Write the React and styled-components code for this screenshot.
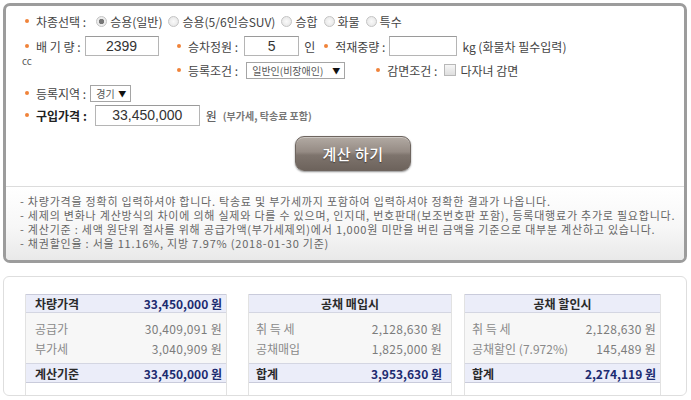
import React from 'react';
import styled, { createGlobalStyle, css } from 'styled-components';

const GlobalStyle = createGlobalStyle`
    * { box-sizing: border-box; }
    body {
        margin: 0;
        background: #fff;
        font-family: "Noto Sans CJK KR", "Noto Sans", sans-serif;
        font-size: 12px;
        color: #444;
    }
`

const Page = styled.div`
    width: 691px;
    padding: 3px 4px 0 3px;
`

const InputPanel = styled.div`
    border: 3px solid #9c9c9c;
    border-radius: 7px;
    overflow: hidden;
`

const Form = styled.div`
    padding: 4px 0 0 16px;
`

const Row = styled.div`
    display: flex;
    align-items: ${p => p.$top ? 'flex-start' : 'center'};
    height: ${p => p.$h || 22}px;
    margin-bottom: ${p => p.$mb || 0}px;
`

const Cell = styled.div`
    display: flex;
    flex-direction: column;
    width: ${p => p.$w ? `${p.$w}px` : 'auto'};
`

const Line = styled.div`
    display: flex;
    align-items: center;
    height: 24px;
`

const Bullet = styled.span`
    width: 4px;
    height: 4px;
    border-radius: 50%;
    background: #f0833a;
    margin: 0 7px 0 3px;
    flex-shrink: 0;
`

const Label = styled.span`
    white-space: nowrap;
    margin-right: ${p => p.$mr || 4}px;
    font-weight: ${p => p.$bold ? 700 : 400};
    color: ${p => p.$bold ? '#222' : '#444'};
`

const Field = styled.span`
    display: inline-flex;
    align-items: center;
    margin-left: ${p => p.$ml || 0}px;
`

const RadioDot = styled.span`
    width: 11px;
    height: 11px;
    border-radius: 50%;
    border: 1px solid #c4c4c4;
    margin: 0 3px 0 6px;
    ${p => p.$checked ? css`
        background: radial-gradient(circle, #777 0 2.4px, #ececec 3px);
    ` : css`
        background: radial-gradient(circle, #fafafa 0, #e2e2e2 100%);
    `}
`

const RadioText = styled.span`
    color: #444;
    white-space: nowrap;
`

const Check = styled.span`
    width: 12px;
    height: 12px;
    border: 1px solid #b8b8b8;
    background: linear-gradient(#f6f6f6, #dedede);
    margin-right: 4px;
`

const TextBox = styled.span`
    display: inline-flex;
    align-items: center;
    justify-content: center;
    width: ${p => p.$w}px;
    height: ${p => p.$h || 20}px;
    border: 1px solid #b5b5b5;
    border-top-color: #9a9a9a;
    background: #fff;
    font-family: "Liberation Sans", Arial, sans-serif;
    font-size: 14px;
    color: #333;
`

const After = styled.span`
    margin-left: ${p => p.$ml || 5}px;
    color: #444;
    white-space: nowrap;
`

const Unit = styled.span`
    font-size: 10px;
    color: #555;
    line-height: 10px;
    margin-top: -2px;
`

const Select = styled.span`
    display: inline-flex;
    align-items: center;
    justify-content: space-between;
    width: ${p => p.$w}px;
    height: 17px;
    border: 1px solid #a5a5a5;
    background: #fff;
    padding: 0 4px 0 5px;
    font-size: 10px;
    color: #555;
    white-space: nowrap;
`

const Arrow = styled.span`
    font-size: 8px;
    color: #111;
`

const Note = styled.span`
    margin-left: 6px;
    font-size: 10px;
    font-weight: 700;
    color: #777;
`

const ButtonRow = styled.div`
    display: flex;
    padding-left: 273px;
    margin-top: 10px;
`

const CalcButton = styled.button`
    width: 116px;
    height: 35px;
    border: 1px solid #6e655f;
    border-radius: 9px;
    background: linear-gradient(#b2aaa3 0%, #958b84 45%, #7e746d 55%, #6d635c 100%);
    box-shadow: 0 1px 2px rgba(0, 0, 0, 0.45), inset 0 1px 0 rgba(255, 255, 255, 0.35);
    color: #fff;
    font-family: "Noto Sans CJK KR", sans-serif;
    font-size: 15px;
    font-weight: 500;
    text-shadow: 0 1px 1px rgba(0, 0, 0, 0.45);
    letter-spacing: 0.5px;
`

const Notes = styled.div`
    margin-top: 15px;
    border-top: 1px solid #dcdcdc;
    background: linear-gradient(#ffffff 0%, #f7f7f7 55%, #e9e9e9 100%);
    padding: 7px 0 10px 14px;
    font-size: 11px;
    line-height: 14px;
    color: #666;
`

const NoteLine = styled.div`
    white-space: nowrap;
    letter-spacing: 0.78px;
`

const ResultBox = styled.div`
    margin-top: 13px;
    height: 120px;
    border: 1px solid #dedede;
    border-radius: 6px;
    padding: 17px 0 0 21px;
    display: flex;
`

const Table = styled.div`
    width: ${p => p.$w}px;
    margin-right: ${p => p.$mr || 0}px;
    border-left: 1px solid #e2e2e2;
    border-right: 1px solid #e2e2e2;
`

const HeadRow = styled.div`
    display: flex;
    align-items: center;
    justify-content: ${p => p.$center ? 'center' : 'space-between'};
    height: ${p => p.$foot ? 20 : 19}px;
    background: #ebedf9;
    border-top: 1px solid ${p => p.$foot ? '#d4d6e2' : '#c9cbdb'};
    border-bottom: 1px solid ${p => p.$foot ? '#c9cbdb' : '#d4d6e2'};
    padding: 0 ${p => p.$pr || 9}px 0 ${p => p.$pl || 9}px;
    font-weight: 700;
`

const HeadLabel = styled.span`
    color: #2a2a2a;
`

const HeadValue = styled.span`
    color: #1c2b70;
`

const Body = styled.div`
    background: #f7f7f7;
    padding: 6px 0 5px;
`

const BodyRow = styled.div`
    display: flex;
    align-items: center;
    justify-content: space-between;
    height: 19.5px;
    padding: 0 ${p => p.$pr || 9}px 0 ${p => p.$pl || 9}px;
    color: #8a8a8a;
`

const BodyValue = styled.span`
    color: #7c7c7c;
    letter-spacing: 0.3px;
`

const radios = [
    { text: '승용(일반)', checked: true },
    { text: '승용(5/6인승SUV)' },
    { text: '승합' },
    { text: '화물' },
    { text: '특수' },
]

const tables = [
    {
        w: 202, mr: 21, pl: 9, pr: 4,
        head: ['차량가격', '33,450,000 원'],
        rows: [['공급가', '30,409,091 원'], ['부가세', '3,040,909 원']],
        foot: ['계산기준', '33,450,000 원'],
    },
    {
        w: 204, mr: 12, pl: 7, pr: 9,
        title: '공채 매입시',
        rows: [['취 득 세', '2,128,630 원'], ['공채매입', '1,825,000 원']],
        foot: ['합계', '3,953,630 원'],
    },
    {
        w: 197, pl: 7, pr: 4,
        title: '공채 할인시',
        rows: [['취 득 세', '2,128,630 원'], ['공채할인 (7.972%)', '145,489 원']],
        foot: ['합계', '2,274,119 원'],
    },
]

function ResultTable({ w, mr, pl, pr, head, title, rows, foot }) {
    return (
        <Table $w={w} $mr={mr}>
            {head ? (
                <HeadRow $pl={pl} $pr={pr}>
                    <HeadLabel>{head[0]}</HeadLabel>
                    <HeadValue>{head[1]}</HeadValue>
                </HeadRow>
            ) : (
                <HeadRow $center>
                    <HeadLabel>{title}</HeadLabel>
                </HeadRow>
            )}
            <Body>
                {rows.map(r => (
                    <BodyRow key={r[0]} $pl={pl} $pr={pr}>
                        <span>{r[0]}</span>
                        <BodyValue>{r[1]}</BodyValue>
                    </BodyRow>
                ))}
            </Body>
            <HeadRow $foot $pl={pl} $pr={pr}>
                <HeadLabel>{foot[0]}</HeadLabel>
                <HeadValue>{foot[1]}</HeadValue>
            </HeadRow>
        </Table>
    )
}

export default function App() {
    return (
        <Page>
            <GlobalStyle />
            <InputPanel>
                <Form>
                    <Row $mb={2}>
                        <Bullet />
                        <Label>차종선택 :</Label>
                        {radios.map(r => (
                            <Field key={r.text}>
                                <RadioDot $checked={r.checked} />
                                <RadioText>{r.text}</RadioText>
                            </Field>
                        ))}
                    </Row>
                    <Row $top $h={48}>
                        <Cell $w={152}>
                            <Line>
                                <Bullet />
                                <Label>배 기 량 :</Label>
                                <TextBox $w={74}>2399</TextBox>
                            </Line>
                            <Unit>cc</Unit>
                        </Cell>
                        <Cell>
                            <Line>
                                <Bullet />
                                <Label $mr={6}>승차정원 :</Label>
                                <TextBox $w={55}>5</TextBox>
                                <After>인</After>
                                <Field $ml={6}>
                                    <Bullet />
                                    <Label>적재중량 :</Label>
                                    <TextBox $w={68} />
                                    <After>kg (화물차 필수입력)</After>
                                </Field>
                            </Line>
                            <Line>
                                <Bullet />
                                <Label $mr={8}>등록조건 :</Label>
                                <Select $w={99}>일반인(비장애인) <Arrow>▼</Arrow></Select>
                                <Field $ml={28}>
                                    <Bullet />
                                    <Label $mr={7}>감면조건 :</Label>
                                    <Check />
                                    <RadioText>다자녀 감면</RadioText>
                                </Field>
                            </Line>
                        </Cell>
                    </Row>
                    <Row>
                        <Bullet />
                        <Label>등록지역 :</Label>
                        <Select $w={41}>경기 <Arrow>▼</Arrow></Select>
                    </Row>
                    <Row $mb={1}>
                        <Bullet />
                        <Label $bold $mr={8}>구입가격 :</Label>
                        <TextBox $w={105} $h={21}>33,450,000</TextBox>
                        <After $ml={6}>원</After>
                        <Note>(부가세, 탁송료 포함)</Note>
                    </Row>
                    <ButtonRow>
                        <CalcButton>계산 하기</CalcButton>
                    </ButtonRow>
                </Form>
                <Notes>
                    <NoteLine>- 차량가격을 정확히 입력하셔야 합니다. 탁송료 및 부가세까지 포함하여 입력하셔야 정확한 결과가 나옵니다.</NoteLine>
                    <NoteLine>- 세제의 변화나 계산방식의 차이에 의해 실제와 다를 수 있으며, 인지대, 번호판대(보조번호판 포함), 등록대행료가 추가로 필요합니다.</NoteLine>
                    <NoteLine>- 계산기준 : 세액 원단위 절사를 위해 공급가액(부가세제외)에서 1,000원 미만을 버린 금액을 기준으로 대부분 계산하고 있습니다.</NoteLine>
                    <NoteLine>- 채권할인율 : 서울 11.16%, 지방 7.97% (2018-01-30 기준)</NoteLine>
                </Notes>
            </InputPanel>
            <ResultBox>
                {tables.map(t => <ResultTable key={t.foot[1]} {...t} />)}
            </ResultBox>
        </Page>
    )
}
